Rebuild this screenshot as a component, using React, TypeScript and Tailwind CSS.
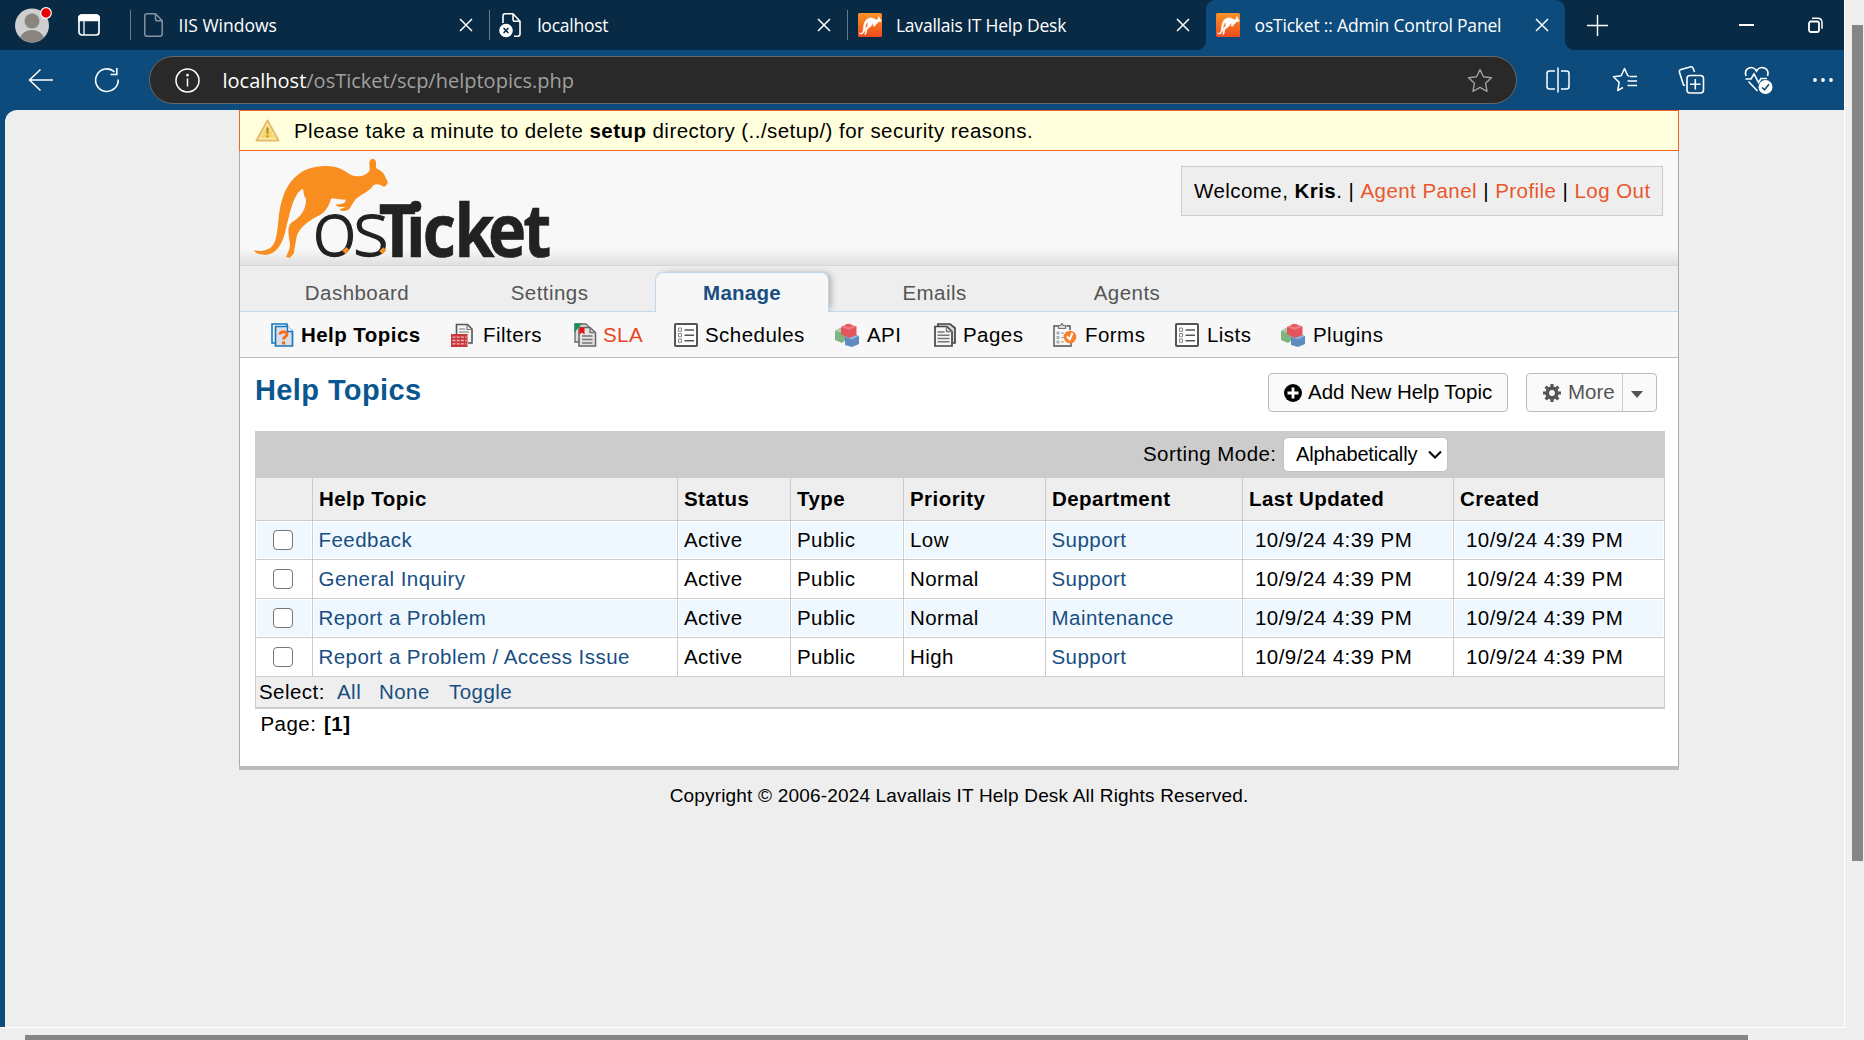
import type { ReactNode } from 'react';

const ROO =
  'M72 436C100 441 127 436 136 405C148 362 142 325 158 278C176 225 214 183 285 183C330 183 342 198 362 209C382 217 404 216 418 198C421 190 416 178 419 168C422 160 434 160 437 168C440 176 437 184 439 190C453 197 463 205 466 217C469 224 474 228 473 234C470 238 468 245 461 245C452 238 440 235 431 240C424 250 414 258 403 265C388 274 378 279 371 291L358 312C350 320 336 319 328 314C334 309 341 311 346 305C334 308 319 305 317 299C328 296 340 298 346 290L347 284C330 284 315 278 303 281C296 308 282 325 262 334C238 346 206 370 200 395C196 415 194 432 191 446L180 458L168 456C172 446 180 434 180 418C176 388 170 368 184 353C206 340 230 318 228 281C217 268 224 256 217 252C190 268 182 318 169 366C160 416 140 446 108 450C90 450 76 446 72 436Z';

function Logo() {
  return (
    <svg className="block overflow-visible" width="300" height="102" viewBox="69 156 900 306">
      <path d={ROO} fill="#f98e20" />
      <text x="247 370" y="453" fontFamily="Open Sans" fontWeight="300" fontSize="228" fill="#222" stroke="#222" strokeWidth="4">os</text>
      <g transform="scale(0.88 1)">
        <text x="507 600 657 765 880 1000" y="455" fontFamily="Open Sans" fontWeight="700" fontSize="220" fill="#222" stroke="#222" strokeWidth="2">Ticket</text>
      </g>
      <path d="M337 437l12-11 9 9-12 12zM448 438l12-11 9 9-12 12z" fill="#f98e20" />
    </svg>
  );
}

function Favicon() {
  return (
    <svg width="24" height="24" viewBox="0 0 24 24">
      <defs>
        <linearGradient id="fav" x1="0" y1="0" x2="0" y2="1">
          <stop offset="0" stopColor="#f79427" />
          <stop offset="1" stopColor="#ee4b1e" />
        </linearGradient>
      </defs>
      <rect width="24" height="24" rx="1.5" fill="url(#fav)" />
      <g transform="translate(-2.3,-6) scale(0.054,0.06)">
        <path d={ROO} fill="#fff" stroke="#fff" strokeWidth="12" />
      </g>
    </svg>
  );
}

function Close() {
  return (
    <svg width="14" height="14" viewBox="0 0 14 14" stroke="#fff" strokeWidth="1.5">
      <path d="M1 1l12 12M13 1L1 13" />
    </svg>
  );
}

function DocIcon() {
  return (
    <svg className="ml-[14px]" width="19" height="24" viewBox="0 0 19 24" fill="none" stroke="#8494a3" strokeWidth="1.5">
      <path d="M3 .8h8.5l6.7 7V21a2.2 2.2 0 0 1-2.2 2.2H3A2.2 2.2 0 0 1 .8 21V3A2.2 2.2 0 0 1 3 .8zM11.5 1v5a1.8 1.8 0 0 0 1.8 1.8h5" />
    </svg>
  );
}

function DocErrorIcon() {
  return (
    <svg className="ml-[10px]" width="23" height="25" viewBox="0 0 23 25" fill="none" stroke="#fff" strokeWidth="1.6">
      <path d="M4 10V3A2.2 2.2 0 0 1 6 .8h8l7 7.500V21a2.200 2.200 0 0 1-2 2.200h-4M14 1v5.200a2 2 0 0 0 2 2h5" />
      <circle cx="7" cy="17.5" r="6.8" fill="#fff" stroke="none" />
      <path d="M4.600 15l4.800 5M9.400 15l-4.800 5" stroke="#082a45" />
    </svg>
  );
}

function Tab({ icon, title, space, active = false, line = true }: { icon: ReactNode; title: string; space: string; active?: boolean; line?: boolean }) {
  return (
    <div className={`relative flex h-[50px] w-[358.7px] shrink-0 items-center ${active ? 'rounded-t-[9px] bg-[#0c4b7c]' : ''}`}>
      {line && <div className="absolute left-0 top-[10px] h-[30px] w-px bg-[#66788a]" />}
      <div className="flex w-[48.5px] shrink-0 items-center">{icon}</div>
      <span className={`grow whitespace-nowrap text-[17.5px] leading-[24px] text-white ${space}`}>{title}</span>
      <div className="mr-[16px]"><Close /></div>
      {active && (
        <>
          <div className="absolute -left-[9px] bottom-0 h-[9px] w-[9px] overflow-hidden bg-[#0c4b7c]"><div className="h-full w-full rounded-br-[9px] bg-[#082a45]" /></div>
          <div className="absolute -right-[9px] bottom-0 h-[9px] w-[9px] overflow-hidden bg-[#0c4b7c]"><div className="h-full w-full rounded-bl-[9px] bg-[#082a45]" /></div>
        </>
      )}
    </div>
  );
}

function TabBar() {
  return (
    <div className="flex h-[50px] items-center bg-[#082a45]">
      <div className="relative ml-[15px] h-[40px] w-[38px] shrink-0">
        <svg width="38" height="42" viewBox="0 0 38 42">
          <clipPath id="av"><ellipse cx="17" cy="20.5" rx="17" ry="17" /></clipPath>
          <g clipPath="url(#av)">
            <rect width="38" height="42" fill="#cfcfcf" />
            <ellipse cx="17" cy="16" rx="7.5" ry="7.5" fill="#8b8580" />
            <ellipse cx="17" cy="36" rx="12.5" ry="11" fill="#8b8580" />
          </g>
          <circle cx="31" cy="8" r="5.3" fill="#e60000" stroke="#fff" strokeWidth="1.2" />
        </svg>
      </div>
      <svg className="ml-[25px] mr-[30px] shrink-0" width="22" height="22" viewBox="0 0 22 22" fill="none" stroke="#fff" strokeWidth="1.7">
        <rect x="1" y="1" width="20" height="20" rx="3" />
        <path d="M1 3.5A2.5 2.5 0 0 1 3.5 1h15A2.5 2.5 0 0 1 21 3.5V6.500H1z" fill="#fff" />
        <path d="M6 6v15" strokeWidth="1.3" />
      </svg>
      <Tab icon={<DocIcon />} title="IIS Windows" space="tracking-[0px]" />
      <Tab icon={<DocErrorIcon />} title="localhost" space="tracking-[-0.250px]" />
      <Tab icon={<div className="ml-[11px]"><Favicon /></div>} title="Lavallais IT Help Desk" space="tracking-[-0.200px]" />
      <Tab icon={<div className="ml-[10px]"><Favicon /></div>} title="osTicket :: Admin Control Panel" space="tracking-[-0.200px]" active line={false} />
      <svg className="ml-[22px] shrink-0" width="21" height="21" viewBox="0 0 21 21" stroke="#fff" strokeWidth="1.4"><path d="M10.500 0v21M0 10.500h21" /></svg>
      <div className="ml-[131px] h-[1.5px] w-[15px] bg-white" />
      <svg className="ml-[54px] shrink-0" width="15" height="16" viewBox="0 0 15 16" fill="none" stroke="#fff" strokeWidth="1.8">
        <rect x="1" y="4.500" width="10" height="10.500" rx="2" />
        <path d="M4 1.200h5.500c3 0 4.500 1.800 4.500 4.500v6" strokeWidth="1.5" />
      </svg>
    </div>
  );
}

function Toolbar() {
  return (
    <div className="flex h-[60px] items-center bg-[#0c4b7c]">
      <svg className="ml-[28px]" width="26" height="24" viewBox="0 0 26 24" fill="none" stroke="#fff" strokeWidth="1.5"><path d="M25 12H2M12.500 1.500L1.500 12l11 10.500" /></svg>
      <svg className="ml-[40px]" width="26" height="26" viewBox="0 0 26 26" fill="none" stroke="#fff" strokeWidth="1.6"><path d="M24.200 12.500A11.300 11.300 0 1 1 20.500 4.800M16.500 7.500h6.300V1" /></svg>
      <div className="ml-[29px] flex h-[48px] w-[1368px] items-center rounded-full border border-[#676767] bg-[#292929]">
        <svg className="ml-[25px]" width="25" height="25" viewBox="0 0 25 25" fill="none" stroke="#fff" strokeWidth="1.5"><circle cx="12.500" cy="12.500" r="11.500" /><path d="M12.500 10.500v8" /><circle cx="12.500" cy="7.200" r=".6" fill="#fff" /></svg>
        <span className="ml-[22.500px] grow pt-px text-[20px] text-[#a0a0a0]"><span className="text-white">localhost</span>/osTicket/scp/helptopics.php</span>
        <svg className="mr-[23px]" width="26" height="25" viewBox="0 0 26 25" fill="none" stroke="#a0a0a0" strokeWidth="1.4" strokeLinejoin="round"><path d="M13 1.500l3.400 7.300 8.100 1-6 5.500 1.600 8L13 19.300l-7.100 4 1.600-8-6-5.500 8.100-1z" /></svg>
      </div>
      <svg className="ml-[28px]" width="26" height="26" viewBox="0 0 26 26" fill="none" stroke="#fff" strokeWidth="1.5"><path d="M10 4H4.500A2.500 2.500 0 0 0 2 6.500v13A2.500 2.500 0 0 0 4.500 22H10M16 4h5.500A2.500 2.500 0 0 1 24 6.500v13a2.500 2.500 0 0 1-2.500 2.500H16M13 .5v25" /></svg>
      <svg className="ml-[41px]" width="26" height="26" viewBox="0 0 26 26" fill="none" stroke="#fff" strokeWidth="1.5" strokeLinejoin="round"><path d="M17 8.700h-1.200L12.500 1.500 9.200 8.800l-7.700 1 5.700 5.600-1.500 8.100L11 20.500M15.500 14H25M15.500 18.500H25M17.500 9.500H25" /></svg>
      <svg className="ml-[40px]" width="27" height="29" viewBox="0 0 27 29" fill="none" stroke="#fff" strokeWidth="1.6"><path d="M7 19.500l-1.500-.6-4-12.500a2.400 2.400 0 0 1 1.500-3L12 1a2.500 2.500 0 0 1 3.200 1.500L16.500 6" /><rect x="9" y="9.500" width="16.500" height="17.500" rx="3" /><path d="M17.300 13v10.500M12 18.300h10.500" /></svg>
      <svg className="ml-[39px]" width="29" height="29" viewBox="0 0 29 29" fill="none" stroke="#fff" strokeWidth="1.6"><path d="M2 10C-.5 2 9 -1.500 12.500 5 16 -1.500 26 2 23.500 10M4.500 15.500L13.500 25M1.500 13H7l3-5 4.500 8.500 2.500-4h6" /><circle cx="21.500" cy="21" r="7" fill="#fff" stroke="none" /><path d="M18 21.500l2.500 2.300 4.500-5.500" stroke="#0c4b7c" /></svg>
      <svg className="ml-[38px]" width="24" height="6" viewBox="0 0 24 6" fill="#fff"><circle cx="4" cy="3" r="1.900" /><circle cx="12" cy="3" r="1.900" /><circle cx="20" cy="3" r="1.900" /></svg>
    </div>
  );
}

function Box({ children }: { children: ReactNode }) {
  return <svg className="shrink-0" width="24" height="24" viewBox="0 0 24 24" fill="none">{children}</svg>;
}

const TopicsIcon = () => (
  <Box>
    <path d="M4 20H1V1h15v3" stroke="#1878bd" strokeWidth="1.600" />
    <path d="M4.500 3.500h12l5 5V23h-17z" fill="#d9dfe5" stroke="#1878bd" strokeWidth="1.700" />
    <path d="M16.500 2v6.500h5" stroke="#1878bd" strokeWidth="1.500" fill="#fff" />
    <path d="M9 11.500c0-3.500 7-3.500 7 0 0 2.500-3.500 2-3.500 5" stroke="#f56a1c" strokeWidth="2.800" />
    <rect x="11" y="18.500" width="3.200" height="3" fill="#f56a1c" />
  </Box>
);
const FiltersIcon = () => (
  <Box>
    <path d="M5.500 12V1.500h11l4.500 4.500v14h-4" fill="#f4f4f4" stroke="#555" strokeWidth="1.600" />
    <path d="M16 1.500V6.500h5M8 6h6M8 9h10" stroke="#777" strokeWidth="1.200" />
    <rect x="0" y="11" width="16.500" height="13" fill="#c8373c" />
    <path d="M1.500 14.200h14M1.500 17.500h14M1.500 20.800h14" stroke="#f1b5b5" strokeWidth="1.300" strokeDasharray="3 1.200" />
  </Box>
);
const SlaIcon = () => (
  <Box>
    <path d="M1 1h11l3 3v15H1z" fill="#dedede" stroke="#666" strokeWidth="1.300" />
    <path d="M.5.5H8l-7.500 9z" fill="#12924b" />
    <path d="M5 4.500h11l5.500 5V23H5z" fill="#e2e2e2" stroke="#666" strokeWidth="1.500" />
    <path d="M16 4.500v5h5.500M8 13h10.500M8 16.500h10.500M8 20h10.500" stroke="#777" strokeWidth="1.500" />
    <path d="M5.500 4.500h5v7l-2.500-2-2.500 2z" fill="#e8121a" />
  </Box>
);
const ListIcon = () => (
  <Box>
    <rect x="1" y="1" width="22" height="22" rx=".7" fill="#fff" stroke="#555" strokeWidth="2" />
    <path d="M10.500 7h9.500M10.500 12.300h9.500M10.500 17.700h9.500" stroke="#555" strokeWidth="1.400" />
    <path d="M4.500 5h3v3.300h-3zM4.500 10.500h3v3.300h-3zM4.500 16h3v3.300h-3z" stroke="#888" strokeWidth="1" />
  </Box>
);
const BlocksIcon = () => (
  <Box>
    <path d="M0 8l5-3 6 3v9l-4 3-7-3z" fill="#7fb380" />
    <path d="M0 8l5-3 6 3-4 2z" fill="#a9cfa8" />
    <path d="M10 14l7-3 7 2v8l-7 3-7-2z" fill="#5f8bbf" />
    <path d="M10 14l7-2.500 7 1.500-7 3.500z" fill="#8db4dc" />
    <path d="M6 4l7-3 8.500 2.500V12l-7.500 3-8-4z" fill="#e2555b" />
    <path d="M6 4l7-3 8.500 2.500L14 7z" fill="#ef7b7f" />
    <ellipse cx="13.500" cy="2.500" rx="3.300" ry="1.700" fill="#e65a60" />
  </Box>
);
const PagesIcon = () => (
  <Box>
    <path d="M4 3V1h12l5 4v15h-2.500" fill="#ddd" stroke="#444" strokeWidth="1.700" />
    <path d="M1 3.500h12l5 5V23H1z" fill="#f5f5f5" stroke="#444" strokeWidth="1.700" />
    <path d="M12.500 3.500v5H18M3.500 9h7M3.500 12.200h12M3.500 15.500h12M3.500 18.800h12" stroke="#777" strokeWidth="1.400" />
  </Box>
);
const FormsIcon = () => (
  <Box>
    <path d="M5 3H1v20h17v-3M13.500 3H17v4" stroke="#777" strokeWidth="1.800" />
    <path d="M5.500 5.500V2.500h2l1.500-2 1.500 2h2v3z" fill="#ddd" stroke="#777" strokeWidth="1.200" />
    <path d="M4 9h2v2H4zM4 13.500h2v2H4zM4 18h2v2H4zM8 10h3M8 14.500h3M8 19h3" stroke="#999" strokeWidth="1" />
    <circle cx="17" cy="14" r="6.300" fill="#f9812c" />
    <path d="M14 13.500l2.700 3L19.500 10" stroke="#fff" strokeWidth="2" />
  </Box>
);

function Sub({ icon, w, children, cls = 'ml-[8px]' }: { icon: ReactNode; w: string; children: ReactNode; cls?: string }) {
  return (
    <div className={`flex shrink-0 items-center whitespace-nowrap ${w}`}>
      {icon}
      <span className={`pt-px ${cls}`}>{children}</span>
    </div>
  );
}

const COLS = 'grid grid-cols-[57px_365px_113px_113px_142px_197px_211px_211px]';
const HEAD = ['', 'Help Topic', 'Status', 'Type', 'Priority', 'Department', 'Last Updated', 'Created'];
const ROWS = [
  ['Feedback', 'Low', 'Support'],
  ['General Inquiry', 'Normal', 'Support'],
  ['Report a Problem', 'Normal', 'Maintenance'],
  ['Report a Problem / Access Issue', 'High', 'Support'],
];

function Cell({ children, tint, pad = 'pl-[6px]', link = false }: { children: ReactNode; tint: boolean; pad?: string; link?: boolean }) {
  return (
    <div className={`flex items-center whitespace-nowrap border-b border-r border-[#ccc] ${link ? 'pl-[5.500px] text-[#184e81]' : pad} ${tint ? 'bg-[#f0f8ff] shadow-[inset_0_0_0_1px_#fff]' : 'bg-white'}`}>
      {children}
    </div>
  );
}

function TopicsTable() {
  const stamp = '10/9/24 4:39 PM';
  return (
    <div className="ml-[15px] w-[1410px]">
      <div className="flex h-[47px] items-center bg-[#ccc] pl-[888px]">
        <span className="mb-px w-[140px] whitespace-nowrap">Sorting Mode:</span>
        <div className="mb-px flex h-[35px] w-[165px] items-center rounded-[5px] border border-[#c2c2c2] bg-white pl-[12px]">
          <span className="w-[132px] text-[20px] tracking-[-0.150px]">Alphabetically</span>
          <svg width="14" height="9" viewBox="0 0 14 9" fill="none" stroke="#111" strokeWidth="2.200"><path d="M1 1.500l6 6 6-6" /></svg>
        </div>
      </div>
      <div className="border-l border-[#ccc]">
        <div className={`${COLS} h-[43px]`}>
          {HEAD.map((h, i) => (
            <div key={i} className="flex items-center whitespace-nowrap border-b border-r border-[#ccc] bg-[#eee] pb-px pl-[6px] font-bold tracking-[0.450px]">{h}</div>
          ))}
        </div>
        {ROWS.map(([name, priority, dept], i) => {
          const tint = i % 2 === 0;
          return (
            <div key={name} className={`${COLS} h-[39px]`}>
              <Cell tint={tint} pad="pl-[17px]"><span className="h-[20px] w-[20px] rounded-[4px] border-[1.500px] border-[#767676] bg-white" /></Cell>
              <Cell tint={tint} link>{name}</Cell>
              <Cell tint={tint}>Active</Cell>
              <Cell tint={tint}>Public</Cell>
              <Cell tint={tint}>{priority}</Cell>
              <Cell tint={tint} link>{dept}</Cell>
              <Cell tint={tint} pad="pl-[12px]">{stamp}</Cell>
              <Cell tint={tint} pad="pl-[12px]">{stamp}</Cell>
            </div>
          );
        })}
        <div className="flex h-[32px] items-center border-b-2 border-r border-[#ccc] bg-[#eee] pl-[3px]">
          <span className="w-[78px]">Select:</span>
          <span className="w-[42px] text-[#184e81]">All</span>
          <span className="w-[70px] text-[#184e81]">None</span>
          <span className="text-[#184e81]">Toggle</span>
        </div>
      </div>
      <div className="flex h-[30px] items-center pl-[5.500px]">
        <span className="w-[63.500px]">Page:</span>
        <b>[1]</b>
      </div>
    </div>
  );
}

const NAV = ['Dashboard', 'Settings', 'Manage', 'Emails', 'Agents'];

function Panel() {
  return (
    <div className="relative ml-[234px] h-[660px] w-[1440px] border-b-4 border-[#bbb] bg-white text-[20.500px] leading-[24px] tracking-[0.450px] text-black">
      <div className="flex h-[41px] items-center border border-[#f26522] bg-[#ffffdd]">
        <svg className="ml-[15px] mr-[14px]" width="25" height="23" viewBox="0 0 25 23">
          <path d="M12.500 1.500L23.500 21.500H1.500z" fill="#fdf0b0" stroke="#e6bb6c" strokeWidth="2" strokeLinejoin="round" />
          <path d="M12.500 5.500L20 19H5z" fill="#f6d768" />
          <path d="M12.500 8.500v6.500M12.500 16.200v2" stroke="#b78f3c" strokeWidth="2.200" />
        </svg>
        <p className="whitespace-pre pt-px">Please take a minute to delete <b>setup</b> directory (../setup/) for security reasons.</p>
      </div>
      <div className="h-[615px] border-x border-[#aaa]">
        <div className="flex h-[115px] justify-between border-b border-[#d6d6d6] bg-[linear-gradient(#f8f8f8_0,#f8f8f8_98px,#dedede_115px)]">
          <div className="ml-[13px] mt-[6px]"><Logo /></div>
          <div className="mr-[15px] mt-[15px] flex h-[50px] w-[482px] items-center whitespace-pre border border-[#ccc] bg-[#eee] pl-[12px]">
            Welcome, <b>Kris</b>. | <span className="text-[#e8572b]">Agent Panel</span> | <span className="text-[#e8572b]">Profile</span> | <span className="text-[#e8572b]">Log Out</span>
          </div>
        </div>
        <div className="flex h-[46px] items-end gap-[18.500px] border-b border-[#c5d9ea] bg-[#eee] pl-[30px] text-[#555]">
          {NAV.map((n) =>
            n === 'Manage' ? (
              <div key={n} className="relative -mb-px flex h-[40px] w-[174px] items-center justify-center rounded-t-[8px] border border-b-0 border-[#c0d8ee] bg-[#f7f7f7] font-bold tracking-[0.250px] text-[#184e81] shadow-[4px_-1px_6px_-2px_#aaa]">
                {n}
                <div className="absolute -bottom-[9px] -left-[8px] h-[9px] w-[190px] bg-[#f7f7f7]" />
              </div>
            ) : (
              <div key={n} className="flex h-[37px] w-[174px] items-center justify-center">{n}</div>
            )
          )}
        </div>
        <div className="flex h-[46px] items-center border-b border-[#bbb] bg-[#f7f7f7] pl-[31px]">
          <Sub icon={<TopicsIcon />} w="w-[180px]" cls="ml-[6px] font-bold">Help Topics</Sub>
          <Sub icon={<FiltersIcon />} w="w-[123px]">Filters</Sub>
          <Sub icon={<SlaIcon />} w="w-[100px]" cls="ml-[5px] text-[#e8461f]">SLA</Sub>
          <Sub icon={<ListIcon />} w="w-[161px]" cls="ml-[7px]">Schedules</Sub>
          <Sub icon={<BlocksIcon />} w="w-[99px]" cls="ml-[8px]">API</Sub>
          <Sub icon={<PagesIcon />} w="w-[119px]" cls="ml-[5px]">Pages</Sub>
          <Sub icon={<FormsIcon />} w="w-[122px]">Forms</Sub>
          <Sub icon={<ListIcon />} w="w-[106px]" cls="ml-[8px]">Lists</Sub>
          <Sub icon={<BlocksIcon />} w="w-[120px]" cls="ml-[8px]">Plugins</Sub>
        </div>
        <div className="-ml-px flex h-[73px] items-start pl-[16px]">
          <h1 className="mt-[11px] w-[1013px] text-[29px] font-bold leading-[42px] tracking-[0.400px] text-[#0a568e]">Help Topics</h1>
          <div className="mt-[15px] flex h-[39px] w-[240px] items-center rounded-[4px] border border-[#bbb] bg-[#fafafa] pl-[15px] tracking-[0px]">
            <svg width="18" height="18" viewBox="0 0 18 18"><circle cx="9" cy="9" r="9" fill="#000" /><path d="M9 3.500v11M3.500 9h11" stroke="#fff" strokeWidth="2.800" /></svg>
            <span className="mb-px ml-[6px] whitespace-nowrap">Add New Help Topic</span>
          </div>
          <div className="ml-[18px] mt-[15px] flex h-[39px] w-[131px] items-center rounded-[4px] border border-[#bbb] bg-[#fafafa] pl-[16px] tracking-[0px] text-[#555]">
            <svg width="18" height="18" viewBox="0 0 18 18"><circle cx="9" cy="9" r="4.700" fill="none" stroke="#555" strokeWidth="4" /><path d="M9 0v18M0 9h18M2.600 2.600l12.800 12.800M15.400 2.600L2.600 15.400" stroke="#555" strokeWidth="3.200" /><circle cx="9" cy="9" r="2.900" fill="#fafafa" /></svg>
            <span className="mb-px ml-[7px] w-[54px]">More</span>
            <div className="h-full w-px bg-[#ccc]" />
            <svg className="ml-[8px] mt-[3px]" width="12" height="7" viewBox="0 0 12 7"><path d="M0 0h12L6 7z" fill="#555" /></svg>
          </div>
        </div>
        <TopicsTable />
      </div>
    </div>
  );
}

export default function App() {
  return (
    <div className="flex h-[1040px] w-[1864px] flex-col overflow-hidden bg-[#efefef] font-['Liberation_Sans',sans-serif]">
      <div className="flex h-[1028px]">
        <div className="flex w-[1844px] flex-col border-b border-white bg-[#0c4b7c]">
          <div className="font-['Open_Sans',sans-serif]">
            <TabBar />
            <Toolbar />
          </div>
          <div className="ml-[5px] grow rounded-tl-[12px] bg-[#eee]">
            <Panel />
            <p className="ml-[234px] mt-[11px] w-[1440px] text-center text-[19px] leading-[30px] tracking-[0.180px] text-black">Copyright © 2006-2024 Lavallais IT Help Desk All Rights Reserved.</p>
          </div>
        </div>
        <div className="w-[20px] border-l border-white pl-[7px] pt-[25px]">
          <div className="h-[836px] w-[11px] bg-[#858585]" />
        </div>
      </div>
      <div className="flex h-[12px] items-end">
        <div className="ml-[25px] h-[5px] w-[1723px] bg-[#858585]" />
      </div>
    </div>
  );
}
